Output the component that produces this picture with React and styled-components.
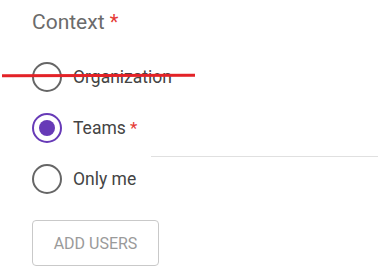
import styled, { createGlobalStyle } from 'styled-components';

const GlobalStyle = createGlobalStyle`
  body {
    margin: 0;
    background: #fff;
    font-family: Roboto, 'Liberation Sans', sans-serif;
  }
`;

const options = [
  { id: 'org', label: 'Organization' },
  { id: 'teams', label: 'Teams', required: true, field: true },
  { id: 'me', label: 'Only me' },
];

const App = () => {
  const selected = 'teams';
  return (
    <>
      <GlobalStyle />
      <Form>
        <Label>
          Context <Star>*</Star>
        </Label>
        <Group>
          {options.map((o) => (
            <Row key={o.id}>
              <Radio $checked={o.id === selected} />
              <OptionText>
                {o.label}
                {o.required && <Star $small> *</Star>}
              </OptionText>
              {o.field && <Field />}
            </Row>
          ))}
        </Group>
        <Button>Add users</Button>
        <Strike />
      </Form>
    </>
  );
};

export default App;

const Form = styled.div`
  position: relative;
  display: flex;
  flex-direction: column;
  align-items: flex-start;
  padding: 9px 3px 0 32px;
`;

const Label = styled.div`
  font-size: 21px;
  line-height: 26px;
  color: #6b6b6b;
`;

const Star = styled.span`
  color: #e53935;
  font-size: ${(p) => (p.$small ? '17px' : '20px')};
`;

const Group = styled.div`
  display: flex;
  flex-direction: column;
  align-self: stretch;
  margin-top: 17px;
`;

const Row = styled.div`
  display: flex;
  align-items: center;
  height: 51px;
  &:first-child {
    height: 50px;
  }
`;

const Radio = styled.span`
  box-sizing: border-box;
  width: 30px;
  height: 30px;
  border-radius: 50%;
  border: 2px solid ${(p) => (p.$checked ? '#673ab7' : '#666')};
  display: flex;
  align-items: center;
  justify-content: center;
  flex-shrink: 0;
  &::after {
    content: '';
    width: 16px;
    height: 16px;
    border-radius: 50%;
    background: #673ab7;
    display: ${(p) => (p.$checked ? 'block' : 'none')};
  }
`;

const OptionText = styled.span`
  margin-left: 11px;
  font-size: 17.5px;
  color: #444;
  white-space: nowrap;
`;

const Field = styled.div`
  flex: 1;
  align-self: flex-end;
  height: 40px;
  margin: 0 0 -4px 14px;
  border-bottom: 1px solid #e0e0e0;
`;

const Button = styled.button`
  margin-top: 16px;
  box-sizing: border-box;
  width: 127px;
  height: 46px;
  background: #fff;
  border: 1px solid #c9c9c9;
  border-radius: 4px;
  font-family: Roboto, 'Liberation Sans', sans-serif;
  font-size: 16px;
  color: #9a9a9a;
  text-transform: uppercase;
  cursor: pointer;
`;

const Strike = styled.div`
  position: absolute;
  left: 2px;
  top: 74px;
  width: 193px;
  height: 3px;
  background: #e32227;
  transform: rotate(-0.2deg);
`;
